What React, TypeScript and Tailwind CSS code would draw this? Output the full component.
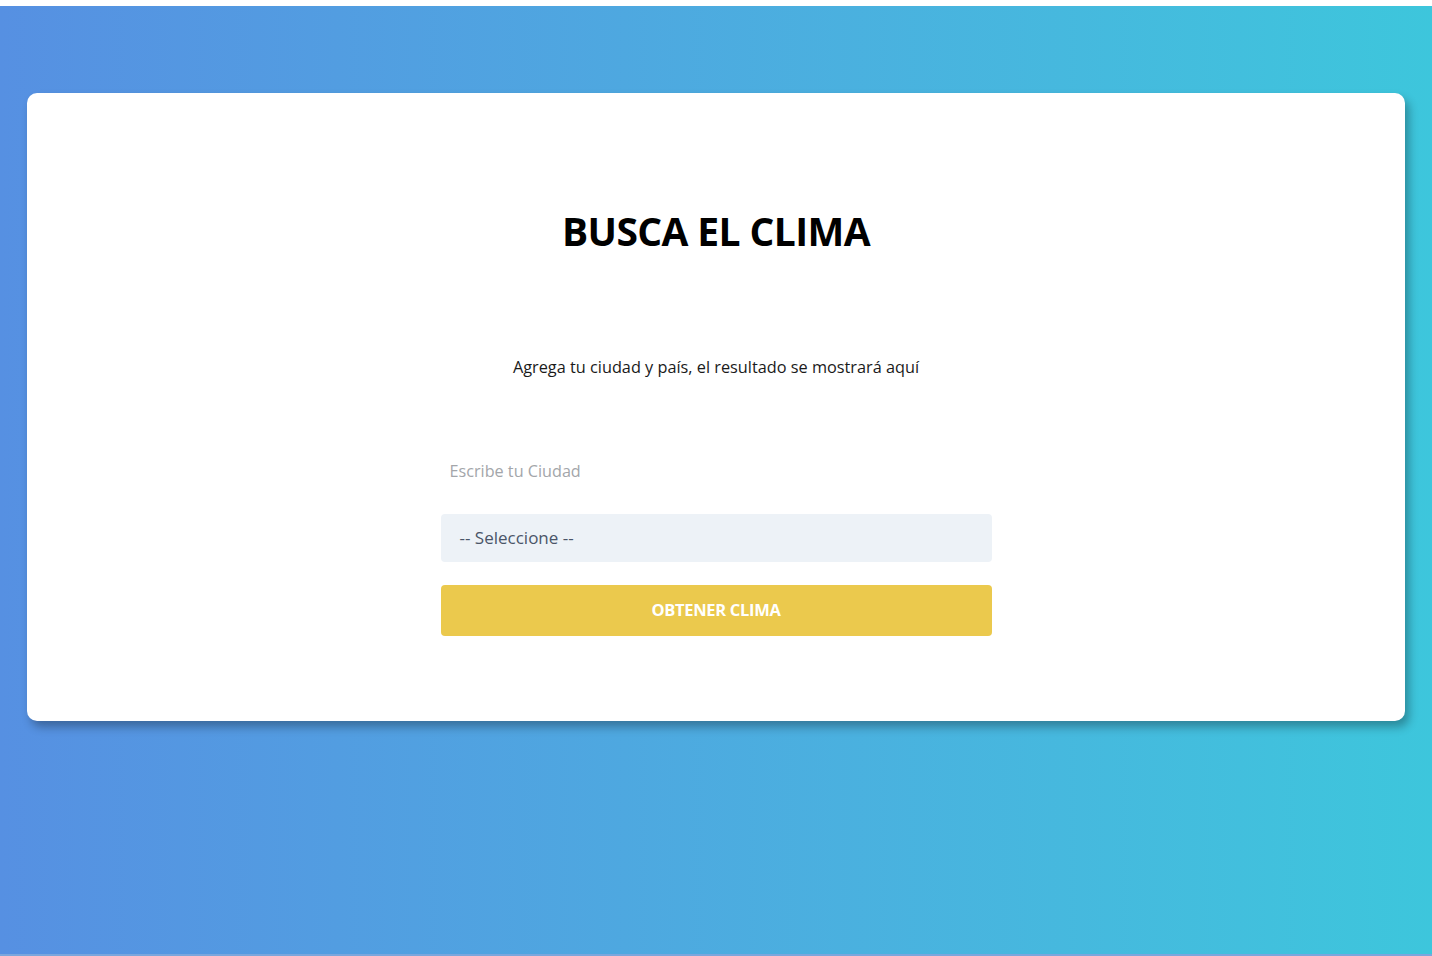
import React from "react";

const App: React.FC = () => {
  return (
    <div className="w-[1432px] h-[956px] bg-white font-['Open_Sans',sans-serif] overflow-hidden">
      {/* Gradient page */}
      <div className="mt-[6px] h-[948px] bg-gradient-to-r from-[#5690e2] to-[#3dc6dc] px-[27px] pt-[87px]">
        {/* Card */}
        <div className="h-[628px] bg-white rounded-[10px] shadow-[4px_6px_10px_rgba(0,0,0,0.3)] flex flex-col items-center">
          <h1 className="mt-[110px] text-[39px] leading-[56px] font-bold text-black tracking-[-0.6px]">
            BUSCA EL CLIMA
          </h1>

          <p className="mt-[96px] text-[16.3px] leading-6 text-[#1a1a1a]">
            Agrega tu ciudad y país, el resultado se mostrará aquí
          </p>

          <form className="mt-[68px] w-[551px] flex flex-col">
            <input
              type="text"
              placeholder="Escribe tu Ciudad"
              className="h-[48px] px-[9px] text-[16.2px] bg-transparent outline-none placeholder:text-[#a3a6aa]"
            />
            <div className="mt-[19px] h-[48px] bg-[#edf2f7] rounded-[4px] flex items-center px-[19px] text-[17px] text-[#4a5568]">
              -- Seleccione --
            </div>
            <button
              type="button"
              className="mt-[23px] h-[51px] bg-[#ebc94d] rounded-[4px] text-white font-bold text-[16.5px] uppercase tracking-[-0.3px]"
            >
              Obtener Clima
            </button>
          </form>
        </div>
      </div>
      <div className="h-[2px] bg-[#7aa6dd]" />
    </div>
  );
};

export default App;
